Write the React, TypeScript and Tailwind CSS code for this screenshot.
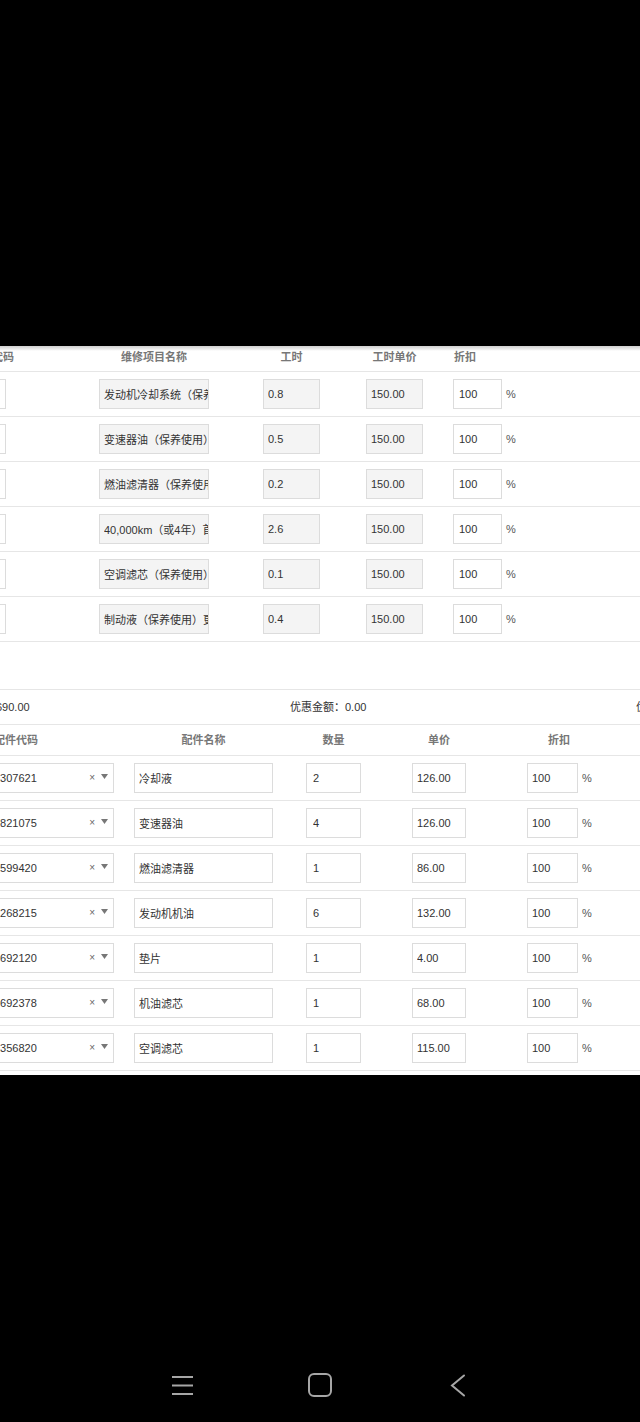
import React from 'react';

const labor = [
  { name: '发动机冷却系统（保养使用）更换', hours: '0.8' },
  { name: '变速器油（保养使用）更换', hours: '0.5' },
  { name: '燃油滤清器（保养使用）更换', hours: '0.2' },
  { name: '40,000km（或4年）首次保养', hours: '2.6' },
  { name: '空调滤芯（保养使用）更换', hours: '0.1' },
  { name: '制动液（保养使用）更换', hours: '0.4' },
];

const parts = [
  { code: '1307621', name: '冷却液', qty: '2', price: '126.00' },
  { code: '2821075', name: '变速器油', qty: '4', price: '126.00' },
  { code: '1599420', name: '燃油滤清器', qty: '1', price: '86.00' },
  { code: '1268215', name: '发动机机油', qty: '6', price: '132.00' },
  { code: '1692120', name: '垫片', qty: '1', price: '4.00' },
  { code: '1692378', name: '机油滤芯', qty: '1', price: '68.00' },
  { code: '1356820', name: '空调滤芯', qty: '1', price: '115.00' },
];

const inputBase = "shrink-0 h-[30px] border border-[#dcdcdc] text-[11px] text-[#333] outline-none";
const readOnlyBox = inputBase + " bg-[#f4f4f4] pl-[4px]";
const whiteBox = inputBase + " bg-white pl-[4px]";
const headText = "shrink-0 text-[11px] font-bold text-[#777] whitespace-nowrap";

const LaborRow = ({ name, hours }: { name: string; hours: string }) => (
  <div className="flex items-center h-[45px] border-b border-[#e6e6e6]">
    <input readOnly value="" className={whiteBox + " ml-[-94px] w-[100px]"} />
    <input readOnly value={name} className={readOnlyBox + " ml-[93px] w-[110px] pl-[3px]"} />
    <input readOnly value={hours} className={readOnlyBox + " ml-[54px] w-[57px]"} />
    <input readOnly value="150.00" className={readOnlyBox + " ml-[46px] w-[57px]"} />
    <input readOnly value="100" className={whiteBox + " ml-[30px] w-[49px] pl-[5px]"} />
    <span className="ml-[4px] text-[11px] text-[#555]">%</span>
  </div>
);

const PartRow = ({ code, name, qty, price }: { code: string; name: string; qty: string; price: string }) => (
  <div className="flex items-center h-[45px] border-b border-[#e6e6e6]">
    <div className="shrink-0 ml-[-12px] w-[126px] h-[30px] flex items-center border border-[#dcdcdc] bg-white pl-[5px] pr-[5px]">
      <span className="flex-1 overflow-hidden whitespace-nowrap text-[11px] text-[#333]">{code}</span>
      <span className="text-[10px] text-[#666] leading-none">×</span>
      <svg className="ml-[6px] mb-[3px]" width="7" height="5" viewBox="0 0 7 5">
        <path d="M0 0h7L3.5 5z" fill="#777" />
      </svg>
    </div>
    <input readOnly value={name} className={whiteBox + " ml-[20px] w-[139px] pl-[4px]"} />
    <input readOnly value={qty} className={whiteBox + " ml-[33px] w-[55px] pl-[6px]"} />
    <input readOnly value={price} className={whiteBox + " ml-[51px] w-[54px]"} />
    <input readOnly value="100" className={whiteBox + " ml-[61px] w-[51px]"} />
    <span className="ml-[4px] text-[11px] text-[#555]">%</span>
  </div>
);

export default function App() {
  return (
    <div className="h-[1422px] w-[640px] bg-black flex flex-col overflow-hidden font-['Liberation_Sans','Noto_Sans_CJK_SC',sans-serif]">
      <div className="h-[346px] shrink-0" />

      <div className="bg-white shrink-0 overflow-hidden">
        {/* labor items */}
        <div className="flex items-center h-[26px] pb-[2px] border-b border-[#e6e6e6] bg-[linear-gradient(to_bottom,#cfcfcf,#ffffff_5px)]">
          <span className={headText + " ml-[-94px] w-[108px] text-right"}>代码</span>
          <span className={headText + " ml-[85px] w-[110px] text-center"}>维修项目名称</span>
          <span className={headText + " ml-[54px] w-[57px] text-center"}>工时</span>
          <span className={headText + " ml-[46px] w-[57px] text-center"}>工时单价</span>
          <span className={headText + " ml-[31px] w-[49px] text-left"}>折扣</span>
        </div>
        {labor.map((r) => (
          <LaborRow key={r.name} name={r.name} hours={r.hours} />
        ))}

        <div className="h-[48px] border-b border-[#e6e6e6]" />

        {/* totals */}
        <div className="flex items-center h-[35px] border-b border-[#e6e6e6] text-[11px] text-[#333] whitespace-nowrap">
          <span className="shrink-0 ml-[-59px] w-[349px]">工时金额：690.00</span>
          <span className="shrink-0 w-[346px]">优惠金额：0.00</span>
          <span className="shrink-0 w-[346px]">优惠后金额：690.00</span>
        </div>

        {/* parts */}
        <div className="flex items-center h-[31px] border-b border-[#e6e6e6]">
          <span className={headText + " ml-[-6px] w-[44px]"}>配件代码</span>
          <span className={headText + " ml-[96px] w-[139px] text-center"}>配件名称</span>
          <span className={headText + " ml-[33px] w-[55px] text-center"}>数量</span>
          <span className={headText + " ml-[51px] w-[54px] text-center"}>单价</span>
          <span className={headText + " ml-[61px] w-[64px] text-center"}>折扣</span>
        </div>
        {parts.map((p) => (
          <PartRow key={p.code} code={p.code} name={p.name} qty={p.qty} price={p.price} />
        ))}
        <div className="h-[4px]" />
      </div>

      <div className="flex-1 flex flex-col justify-end">
        <div className="h-[74px] flex items-center justify-center">
          <div className="w-[138px] flex justify-center">
            <svg width="23" height="21" viewBox="0 0 23 21" fill="none" stroke="#a6a6a6" strokeWidth="2">
              <path d="M1 2h21M1 10.5h21M1 19h21" />
            </svg>
          </div>
          <div className="w-[138px] flex justify-center">
            <svg width="24" height="24" viewBox="0 0 24 24" fill="none" stroke="#a6a6a6" strokeWidth="2">
              <rect x="1" y="1" width="22" height="22" rx="5" />
            </svg>
          </div>
          <div className="w-[138px] flex justify-center">
            <svg width="16" height="23" viewBox="0 0 16 23" fill="none" stroke="#a6a6a6" strokeWidth="2" strokeLinecap="round">
              <path d="M14 1.5L2 11.5l12 10" />
            </svg>
          </div>
        </div>
      </div>
    </div>
  );
}
